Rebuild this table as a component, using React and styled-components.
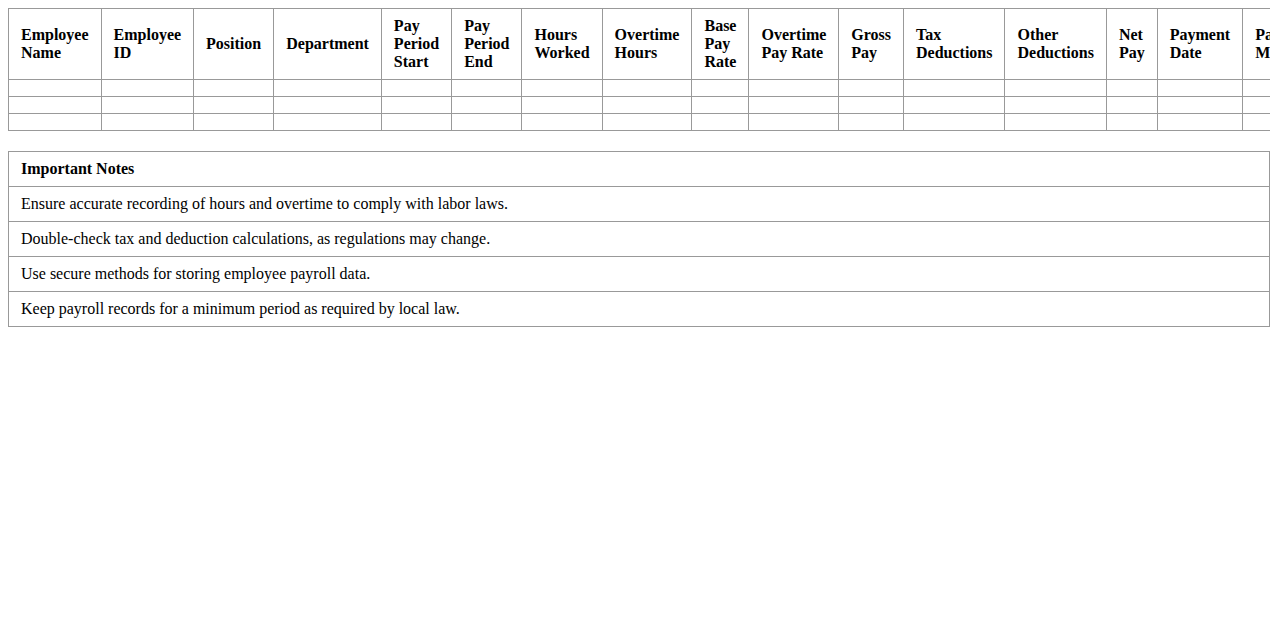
import React from 'react'
import styled, { createGlobalStyle } from 'styled-components'

const GlobalStyle = createGlobalStyle`
  html, body, #root {
    overflow: visible !important;
    contain: none !important;
  }
  body {
    margin: 8px;
    background: #fff;
    color: #000;
    font-family: "Liberation Serif", "Times New Roman", serif;
    font-size: 16px;
  }
`

const Table = styled.table`
  width: 100%;
  border-collapse: collapse;
  margin-bottom: ${props => props.$gap || 0}px;
`

const HeadCell = styled.th`
  border: 1px solid #999;
  padding: 8px 12px;
  text-align: left;
  vertical-align: middle;
  font-weight: bold;
`

const Cell = styled.td`
  border: 1px solid #999;
  padding: 8px 12px;
  text-align: left;
  font-weight: ${props => (props.$strong ? 'bold' : 'normal')};
`

const columns = [
  'Employee Name',
  'Employee ID',
  'Position',
  'Department',
  'Pay Period Start',
  'Pay Period End',
  'Hours Worked',
  'Overtime Hours',
  'Base Pay Rate',
  'Overtime Pay Rate',
  'Gross Pay',
  'Tax Deductions',
  'Other Deductions',
  'Net Pay',
  'Payment Date',
  'Payment Method',
]

const notes = [
  'Ensure accurate recording of hours and overtime to comply with labor laws.',
  'Double-check tax and deduction calculations, as regulations may change.',
  'Use secure methods for storing employee payroll data.',
  'Keep payroll records for a minimum period as required by local law.',
]

export default function App() {
  return (
    <>
      <GlobalStyle />
      <Table $gap={20}>
        <thead>
          <tr>
            {columns.map(c => (
              <HeadCell key={c}>{c}</HeadCell>
            ))}
          </tr>
        </thead>
        <tbody>
          {[0, 1, 2].map(r => (
            <tr key={r}>
              {columns.map(c => (
                <Cell key={c} />
              ))}
            </tr>
          ))}
        </tbody>
      </Table>
      <Table>
        <tbody>
          <tr>
            <Cell $strong>Important Notes</Cell>
          </tr>
          {notes.map(n => (
            <tr key={n}>
              <Cell>{n}</Cell>
            </tr>
          ))}
        </tbody>
      </Table>
    </>
  )
}
